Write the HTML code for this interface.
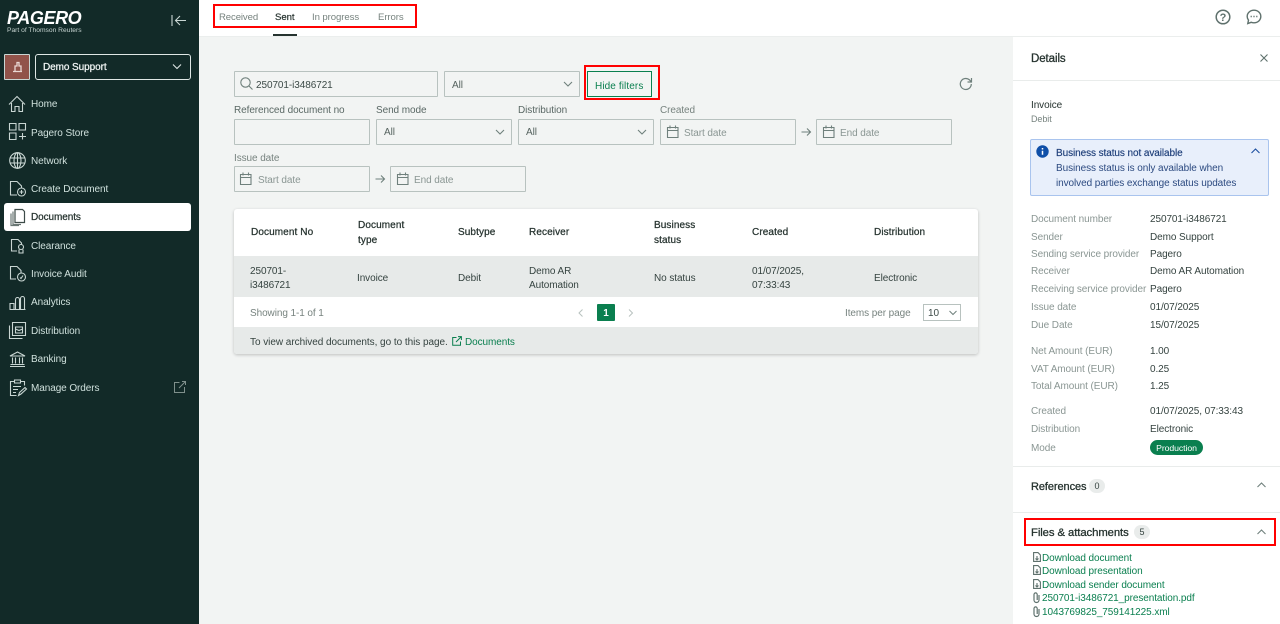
<!DOCTYPE html>
<html><head><meta charset="utf-8">
<style>
html,body{margin:0;padding:0;width:1280px;height:624px;overflow:hidden;background:#fff}
body{font-family:"Liberation Sans",sans-serif;font-size:10px;letter-spacing:-.08px;color:#34423f;position:relative}
.a{position:absolute}
.t{position:absolute;white-space:nowrap;line-height:14px;margin-top:2px}
svg{position:absolute;overflow:visible;fill:none}
.nav{position:absolute;left:31px;color:#cfe0dc;line-height:14px;white-space:nowrap;margin-top:2px}
.box{position:absolute;border:1px solid #b8c2bf;box-sizing:border-box;height:26px;border-radius:1px}
.lab{color:#5a6865}
.ph{color:#8a9693;margin-top:3px}
.th{color:#26332f;font-weight:400;-webkit-text-stroke:.25px #26332f;letter-spacing:.1px}
.d{color:#8a9693;margin-top:3px}
.v{color:#34423f;margin-top:3px}
.g{color:#0a7f4f;margin-top:3px}
.red{position:absolute;border:2px solid #f00;box-sizing:border-box}
.s path,.s circle,.s ellipse{stroke:#c9d6d3;stroke-width:1.1}
</style></head><body>

<!-- sidebar -->
<div class="a" style="left:0;top:0;width:199px;height:624px;background:#122a28"></div>
<div class="t" style="left:7px;top:7px;margin-top:1px;color:#fff;font-size:18px;line-height:20px;font-weight:700;font-style:italic;letter-spacing:-.4px">PAGERO</div>
<div class="t" style="left:7px;top:25px;margin-top:1px;color:#c5d2cf;font-size:6.7px;line-height:10px;letter-spacing:0">Part of Thomson Reuters</div>
<svg style="left:170px;top:13px" width="18" height="16"><path d="M2 2v11M16 7.500H6M10 3L5.500 7.500 10 12" stroke="#c9d6d3" stroke-width="1.100"/></svg>

<div class="a" style="left:4px;top:54px;width:26px;height:26px;background:#91534a;border:1px solid #c9d6d3;box-sizing:border-box;border-radius:1px"></div>
<svg style="left:12px;top:61px" width="12" height="12"><path d="M1 10.500h9M3 10V5h2V1.500h2V5h2v5" stroke="#e9d8d4" stroke-width="1.300"/></svg>
<div class="a" style="left:35px;top:54px;width:156px;height:26px;border:1px solid #dfe7e5;box-sizing:border-box;border-radius:3px"></div>
<div class="t" style="left:43px;top:59px;color:#f1f5f4;-webkit-text-stroke:.25px #f1f5f4">Demo Support</div>
<svg style="left:172px;top:63px" width="10" height="8"><path d="M1 1.500l4 4 4-4" stroke="#dfe7e5" stroke-width="1.100"/></svg>

<svg class="s" style="left:8px;top:95px" width="18" height="18"><path d="M1 9.500L9 1.500l8 8M3.500 8v8.500h3.500v-5h4v5h3.500V8"/></svg>
<div class="nav" style="top:96px">Home</div>
<svg class="s" style="left:9px;top:123px" width="18" height="18"><path d="M.5.500h6.500v6.500H.5zM10 .5h6.500v6.500H10zM.5 10h6.500v6.500H.5zM13.500 10v6.500M10 13.500h7"/></svg>
<div class="nav" style="top:125px">Pagero Store</div>
<svg class="s" style="left:9px;top:152px" width="17" height="17"><circle cx="8.500" cy="8.500" r="7.800"/><ellipse cx="8.500" cy="8.500" rx="3.500" ry="7.800"/><path d="M1 6h15M1 11h15M8.500 1v15"/></svg>
<div class="nav" style="top:153px">Network</div>
<svg class="s" style="left:9px;top:180px" width="18" height="17"><path d="M8 15H1.500V1.500H8l4.500 4.500v2"/><circle cx="12.500" cy="12" r="4"/><path d="M12.500 10v4M10.500 12h4"/></svg>
<div class="nav" style="top:181px">Create Document</div>

<div class="a" style="left:4px;top:203px;width:187px;height:28px;background:#fff;border-radius:3px"></div>
<svg style="left:10px;top:208px" width="16" height="18"><path d="M5 1.500h7.500l2 2v11H5z" stroke="#3d4b48" stroke-width="1.200"/><path d="M3 3.500v13h8M1 5.500v12h8" stroke="#6a7774" stroke-width="1.200"/></svg>
<div class="nav" style="top:209px;color:#26332f;-webkit-text-stroke:.25px #26332f">Documents</div>

<svg class="s" style="left:10px;top:238px" width="16" height="16"><path d="M7 13H1.500V1.500H8l3.500 3.500v1.500"/><circle cx="11" cy="9" r="2.500"/><path d="M9 11.500v3.500h4v-3.500"/></svg>
<div class="nav" style="top:238px">Clearance</div>
<svg class="s" style="left:9px;top:265px" width="18" height="17"><path d="M7 14H1.500V1.500H8l4 4v2.500"/><circle cx="12.500" cy="12" r="4"/><path d="M11 12.500l1 1 2-3"/></svg>
<div class="nav" style="top:266px">Invoice Audit</div>
<svg class="s" style="left:9px;top:295px" width="17" height="15"><path d="M1 14V8.500h4V14M6.500 14V4.500a2 2 0 0 1 4 0V14M11.500 14V3.500a2 2 0 0 1 4 0V14M.5 14.500h16"/></svg>
<div class="nav" style="top:294px">Analytics</div>
<svg class="s" style="left:9px;top:322px" width="17" height="17"><path d="M3.500.5h13v13h-13zM.5 3.500v13h13"/><path d="M6.500 5h7v6h-7zM6.500 7l3.500 1.500L13.500 7"/></svg>
<div class="nav" style="top:323px">Distribution</div>
<svg class="s" style="left:9px;top:351px" width="17" height="16"><path d="M1 5L8.500 1 16 5zM1 15.500h15M1.500 13.500h14M3.500 6.500v6M6.500 6.500v6M10.500 6.500v6M13.500 6.500v6"/></svg>
<div class="nav" style="top:351px">Banking</div>
<svg class="s" style="left:9px;top:379px" width="18" height="18"><path d="M5 2.500H1.500v14h6M12 2.500h3.500v4M5.500 1h6v3h-6zM4 7.500h8M4 10.500h5M4 13.500h3M9.500 16.500l1-3 5.500-5 1.500 1.500-5.500 5z"/></svg>
<div class="nav" style="top:380px">Manage Orders</div>
<svg style="left:174px;top:381px" width="12" height="12"><path d="M5.500 1.500H.5v10h10V6M5 7L11 1M8 .5h3.500V4" stroke="#7f908c"/></svg>

<!-- top bar -->
<div class="a" style="left:199px;top:0;width:1081px;height:37px;background:#fff"></div>
<div class="t" style="left:219px;top:9px;color:#77837f;font-size:9.600px;letter-spacing:-.12px">Received</div>
<div class="t" style="left:275px;top:9px;color:#26332f;-webkit-text-stroke:.2px #26332f;font-size:9.600px">Sent</div>
<div class="t" style="left:312px;top:9px;color:#77837f;font-size:9.600px">In progress</div>
<div class="t" style="left:378px;top:9px;color:#77837f;font-size:9.600px">Errors</div>
<div class="a" style="left:273px;top:34px;width:24px;height:2px;background:#26332f"></div>
<div class="red" style="left:213px;top:4px;width:204px;height:24px"></div>
<svg style="left:1215px;top:9px" width="16" height="16"><circle cx="8" cy="8" r="6.800" stroke="#5f716d" stroke-width="1.500"/><text x="8" y="12" font-size="11" font-weight="700" text-anchor="middle" fill="#5f716d" font-family="Liberation Sans">?</text></svg>
<svg style="left:1246px;top:9px" width="16" height="16"><path d="M8 1.200c3.800 0 6.800 2.800 6.800 6.300s-3 6.300-6.800 6.300c-1 0-2-.2-2.800-.5L1.800 14.500l.7-3.300C1.600 10.100 1.200 8.900 1.200 7.500 1.200 4 4.200 1.200 8 1.200z" stroke="#5f716d" stroke-width="1.400"/><path d="M4.600 7.500h1.200M7.400 7.500h1.200M10.200 7.500h1.200" stroke="#5f716d" stroke-width="1.400"/></svg>

<!-- main -->
<div class="a" style="left:199px;top:37px;width:814px;height:587px;background:#f2f4f3"></div>
<div class="a" style="left:199px;top:36px;width:1081px;height:1px;background:#ebeeed"></div>

<div class="box" style="left:234px;top:71px;width:204px"></div>
<svg style="left:240px;top:77px" width="13" height="13"><circle cx="5.500" cy="5.500" r="4.700" stroke="#6f807c" stroke-width="1.100"/><path d="M9 9l3.500 3.500" stroke="#6f807c" stroke-width="1.100"/></svg>
<div class="t" style="left:256px;top:77px;color:#3c4a47">250701-i3486721</div>
<div class="box" style="left:444px;top:71px;width:136px"></div>
<div class="t" style="left:452px;top:77px;color:#56635f">All</div>
<svg style="left:563px;top:81px" width="10" height="7"><path d="M1 1l4 4 4-4" stroke="#6f807c" stroke-width="1.100"/></svg>
<div class="a" style="left:587px;top:71px;width:65px;height:26px;border:1px solid #0a7f4f;box-sizing:border-box"></div>
<div class="t g" style="left:595px;top:77px;letter-spacing:.1px">Hide filters</div>
<div class="red" style="left:584px;top:65px;width:76px;height:35px"></div>
<svg style="left:959px;top:77px" width="14" height="14"><path d="M12.300 7a5.500 5.500 0 1 1-1.600-3.900L12.500 5M12.500 1v4h-4" stroke="#6f807c" stroke-width="1.200"/></svg>

<div class="t lab" style="left:234px;top:102px">Referenced document no</div>
<div class="box" style="left:234px;top:119px;width:136px"></div>
<div class="t lab" style="left:376px;top:102px">Send mode</div>
<div class="box" style="left:376px;top:119px;width:136px"></div>
<div class="t" style="left:384px;top:124px;color:#56635f">All</div>
<svg style="left:495px;top:129px" width="10" height="7"><path d="M1 1l4 4 4-4" stroke="#6f807c" stroke-width="1.100"/></svg>
<div class="t lab" style="left:518px;top:102px">Distribution</div>
<div class="box" style="left:518px;top:119px;width:136px"></div>
<div class="t" style="left:526px;top:124px;color:#56635f">All</div>
<svg style="left:637px;top:129px" width="10" height="7"><path d="M1 1l4 4 4-4" stroke="#6f807c" stroke-width="1.100"/></svg>
<div class="t" style="left:660px;top:102px;color:#77837f">Created</div>
<div class="box" style="left:660px;top:119px;width:136px"></div>
<svg style="left:667px;top:125px" width="12" height="13"><path d="M.5 2.500h10.500v10H.5zM.5 5.500h10.500M3 .5v3M8.500 .5v3" stroke="#6f807c" stroke-width="1.100"/></svg>
<div class="t ph" style="left:684px;top:124px">Start date</div>
<svg style="left:801px;top:127px" width="11" height="10"><path d="M.5 5h9M6 1.500L9.500 5 6 8.500" stroke="#6f807c" stroke-width="1.100"/></svg>
<div class="box" style="left:816px;top:119px;width:136px"></div>
<svg style="left:823px;top:125px" width="12" height="13"><path d="M.5 2.500h10.500v10H.5zM.5 5.500h10.500M3 .5v3M8.500 .5v3" stroke="#6f807c" stroke-width="1.100"/></svg>
<div class="t ph" style="left:840px;top:124px">End date</div>

<div class="t" style="left:234px;top:150px;color:#77837f">Issue date</div>
<div class="box" style="left:234px;top:166px;width:136px"></div>
<svg style="left:240px;top:172px" width="12" height="13"><path d="M.5 2.500h10.500v10H.5zM.5 5.500h10.500M3 .5v3M8.500 .5v3" stroke="#6f807c" stroke-width="1.100"/></svg>
<div class="t ph" style="left:258px;top:171px">Start date</div>
<svg style="left:375px;top:174px" width="11" height="10"><path d="M.5 5h9M6 1.500L9.500 5 6 8.500" stroke="#6f807c" stroke-width="1.100"/></svg>
<div class="box" style="left:390px;top:166px;width:136px"></div>
<svg style="left:397px;top:172px" width="12" height="13"><path d="M.5 2.500h10.500v10H.5zM.5 5.500h10.500M3 .5v3M8.500 .5v3" stroke="#6f807c" stroke-width="1.100"/></svg>
<div class="t ph" style="left:414px;top:171px">End date</div>

<!-- table -->
<div class="a" style="left:234px;top:209px;width:744px;height:145px;background:#fff;border-radius:3px;box-shadow:0 1px 3px rgba(0,0,0,.22);overflow:hidden">
  <div class="a" style="left:0;top:47px;width:744px;height:41px;background:#e7eae9"></div>
  <div class="a" style="left:0;top:118px;width:744px;height:27px;background:#e7eae9"></div>
</div>
<div class="t th" style="left:251px;top:224px">Document No</div>
<div class="t th" style="left:358px;top:216px;line-height:15px">Document<br>type</div>
<div class="t th" style="left:458px;top:224px">Subtype</div>
<div class="t th" style="left:529px;top:224px">Receiver</div>
<div class="t th" style="left:654px;top:216px;line-height:15px">Business<br>status</div>
<div class="t th" style="left:752px;top:224px">Created</div>
<div class="t th" style="left:874px;top:224px">Distribution</div>

<div class="t v" style="left:250px;top:262px">250701-<br>i3486721</div>
<div class="t v" style="left:357px;top:269px">Invoice</div>
<div class="t v" style="left:458px;top:269px">Debit</div>
<div class="t v" style="left:529px;top:262px">Demo AR<br>Automation</div>
<div class="t v" style="left:654px;top:269px">No status</div>
<div class="t v" style="left:752px;top:262px">01/07/2025,<br>07:33:43</div>
<div class="t v" style="left:874px;top:269px">Electronic</div>

<div class="t" style="left:250px;top:305px;color:#77837f">Showing 1-1 of 1</div>
<svg style="left:578px;top:309px" width="6" height="8"><path d="M4.500 .5L1 4l3.500 3.500" stroke="#b8c2bf"/></svg>
<div class="a" style="left:597px;top:304px;width:18px;height:17px;background:#0a7f4f;border-radius:1px"></div>
<div class="t" style="left:597px;top:305px;width:18px;text-align:center;color:#fff;font-weight:700">1</div>
<svg style="left:628px;top:309px" width="6" height="8"><path d="M1 .5L4.500 4 1 7.500" stroke="#b8c2bf"/></svg>
<div class="t" style="left:845px;top:305px;color:#77837f">Items per page</div>
<div class="a" style="left:923px;top:304px;width:38px;height:17px;border:1px solid #b8c2bf;box-sizing:border-box"></div>
<div class="t" style="left:928px;top:305px;color:#3c4a47">10</div>
<svg style="left:949px;top:310px" width="8" height="6"><path d="M.5 1L4 4.500 7.500 1" stroke="#6f807c"/></svg>

<div class="t v" style="left:250px;top:333px;letter-spacing:-.04px">To view archived documents, go to this page.</div>
<svg style="left:452px;top:336px" width="10" height="10"><path d="M4.500 1.500H.7v7.800h7.800V5.500M4 6l5-5M6 .6h3.400V4" stroke="#0a7f4f"/></svg>
<div class="t g" style="left:465px;top:333px">Documents</div>

<!-- details -->
<div class="a" style="left:1013px;top:37px;width:267px;height:587px;background:#fff"></div>
<div class="t" style="left:1031px;top:51px;margin-top:1px;font-size:11.500px;color:#26332f;-webkit-text-stroke:.3px #26332f">Details</div>
<svg style="left:1260px;top:54px" width="8" height="8"><path d="M.5 .5l7 7M7.500 .5l-7 7" stroke="#5f716d" stroke-width="1.100"/></svg>
<div class="a" style="left:1013px;top:80px;width:267px;height:1px;background:#e9eceb"></div>
<div class="t" style="left:1031px;top:97px;color:#26332f">Invoice</div>
<div class="t" style="left:1031px;top:110px;color:#77837f;font-size:9px">Debit</div>

<div class="a" style="left:1030px;top:139px;width:239px;height:57px;background:#e8effb;border:1px solid #a9c4ee;box-sizing:border-box;border-radius:2px"></div>
<svg style="left:1036px;top:145px" width="14" height="14"><circle cx="6.500" cy="6.500" r="6.200" fill="#0f4fa8"/><path d="M6.500 5.800v4M6.500 3v1.500" stroke="#fff" stroke-width="1.500"/></svg>
<div class="t" style="left:1056px;top:145px;color:#1c3d78;-webkit-text-stroke:.15px #1c3d78">Business status not available</div>
<div class="t" style="left:1056px;top:160px;color:#2c4a80">Business status is only available when</div>
<div class="t" style="left:1056px;top:175px;color:#2c4a80">involved parties exchange status updates</div>
<svg style="left:1251px;top:148px" width="9" height="6"><path d="M.5 5L4.500 1l4 4" stroke="#1c4fa0" stroke-width="1.100"/></svg>

<div class="t d" style="left:1031px;top:210px">Document number</div><div class="t v" style="left:1150px;top:210px">250701-i3486721</div>
<div class="t d" style="left:1031px;top:228px">Sender</div><div class="t v" style="left:1150px;top:228px">Demo Support</div>
<div class="t d" style="left:1031px;top:245px">Sending service provider</div><div class="t v" style="left:1150px;top:245px">Pagero</div>
<div class="t d" style="left:1031px;top:262px">Receiver</div><div class="t v" style="left:1150px;top:262px">Demo AR Automation</div>
<div class="t d" style="left:1031px;top:280px">Receiving service provider</div><div class="t v" style="left:1150px;top:280px">Pagero</div>
<div class="t d" style="left:1031px;top:298px">Issue date</div><div class="t v" style="left:1150px;top:298px">01/07/2025</div>
<div class="t d" style="left:1031px;top:316px">Due Date</div><div class="t v" style="left:1150px;top:316px">15/07/2025</div>
<div class="t d" style="left:1031px;top:342px">Net Amount (EUR)</div><div class="t v" style="left:1150px;top:342px">1.00</div>
<div class="t d" style="left:1031px;top:360px">VAT Amount (EUR)</div><div class="t v" style="left:1150px;top:360px">0.25</div>
<div class="t d" style="left:1031px;top:377px">Total Amount (EUR)</div><div class="t v" style="left:1150px;top:377px">1.25</div>
<div class="t d" style="left:1031px;top:402px">Created</div><div class="t v" style="left:1150px;top:402px">01/07/2025, 07:33:43</div>
<div class="t d" style="left:1031px;top:420px">Distribution</div><div class="t v" style="left:1150px;top:420px">Electronic</div>
<div class="t d" style="left:1031px;top:439px">Mode</div>
<div class="a" style="left:1150px;top:440px;width:53px;height:15px;background:#0a7f4f;border-radius:8px"></div>
<div class="t" style="left:1150px;top:440px;margin-top:1px;width:53px;text-align:center;color:#fff;font-size:8.700px">Production</div>

<div class="a" style="left:1013px;top:466px;width:267px;height:1px;background:#e9eceb"></div>
<div class="t" style="left:1031px;top:478px;font-size:11px;color:#26332f;-webkit-text-stroke:.3px #26332f">References</div>
<div class="a" style="left:1089px;top:479px;width:16px;height:14px;background:#e9eceb;border-radius:8px"></div>
<div class="t" style="left:1089px;top:478px;margin-top:1px;width:16px;text-align:center;font-size:9px">0</div>
<svg style="left:1257px;top:482px" width="9" height="6"><path d="M.5 5L4.500 1l4 4" stroke="#6f807c" stroke-width="1.100"/></svg>
<div class="a" style="left:1013px;top:512px;width:267px;height:1px;background:#e9eceb"></div>
<div class="red" style="left:1024px;top:518px;width:252px;height:28px"></div>
<div class="t" style="left:1031px;top:524px;font-size:11.300px;color:#26332f;-webkit-text-stroke:.3px #26332f">Files &amp; attachments</div>
<div class="a" style="left:1134px;top:525px;width:16px;height:14px;background:#e9eceb;border-radius:8px"></div>
<div class="t" style="left:1134px;top:524px;margin-top:1px;width:16px;text-align:center;font-size:9px">5</div>
<svg style="left:1257px;top:529px" width="9" height="6"><path d="M.5 5L4.500 1l4 4" stroke="#6f807c" stroke-width="1.100"/></svg>

<svg style="left:1033px;top:552px" width="8" height="10"><path d="M.6 .6h4.400l2.400 2.400v6.400H.6zM4 4v4M2.500 6.500L4 8l1.500-1.500" stroke="#5f716d" stroke-width="1.100"/></svg>
<div class="t g" style="left:1042px;top:549px">Download document</div>
<svg style="left:1033px;top:565px" width="8" height="10"><path d="M.6 .6h4.400l2.400 2.400v6.400H.6zM4 4v4M2.500 6.500L4 8l1.500-1.500" stroke="#5f716d" stroke-width="1.100"/></svg>
<div class="t g" style="left:1042px;top:562px">Download presentation</div>
<svg style="left:1033px;top:579px" width="8" height="10"><path d="M.6 .6h4.400l2.400 2.400v6.400H.6zM4 4v4M2.500 6.500L4 8l1.500-1.500" stroke="#5f716d" stroke-width="1.100"/></svg>
<div class="t g" style="left:1042px;top:576px">Download sender document</div>
<svg style="left:1033px;top:592px" width="7" height="11"><path d="M6 3v5a2.500 2.500 0 0 1-5 0V2.500a1.600 1.600 0 0 1 3.200 0V8" stroke="#5f716d" stroke-width="1.200"/></svg>
<div class="t g" style="left:1042px;top:589px">250701-i3486721_presentation.pdf</div>
<svg style="left:1033px;top:606px" width="7" height="11"><path d="M6 3v5a2.500 2.500 0 0 1-5 0V2.500a1.600 1.600 0 0 1 3.200 0V8" stroke="#5f716d" stroke-width="1.200"/></svg>
<div class="t g" style="left:1042px;top:603px">1043769825_759141225.xml</div>
</body></html>
